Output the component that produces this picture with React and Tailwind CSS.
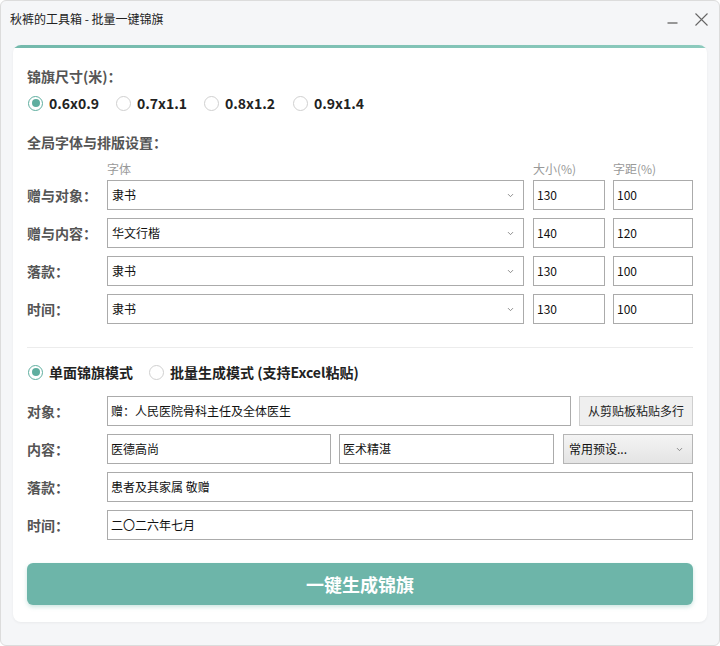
import { ChevronDown } from 'lucide-react';

const font = "font-['Microsoft_YaHei','Noto_Sans_CJK_SC',sans-serif]";

function Radio({ checked, label, className = '' }) {
  return (
    <div className={`flex items-center gap-[6px] ${className}`}>
      <span
        className={`w-[15px] h-[15px] rounded-full flex items-center justify-center border-[1.5px] ${
          checked ? 'border-[#5fae9f]' : 'border-[#d0d0d0]'
        }`}
      >
        {checked && <span className="w-[8px] h-[8px] rounded-full bg-[#5fae9f]" />}
      </span>
      <span className="text-[14px] font-bold text-[#222] leading-5">{label}</span>
    </div>
  );
}

function Field({ value, className = '' }) {
  return (
    <div
      className={`h-[30px] border border-[#ababab] bg-white flex items-center px-[3px] text-[12px] text-[#111] ${className}`}
    >
      {value}
    </div>
  );
}

function Select({ value, className = '' }) {
  return (
    <div
      className={`h-[30px] border border-[#ababab] bg-white flex items-center justify-between pl-[4px] pr-[8px] text-[12px] text-[#111] ${className}`}
    >
      <span>{value}</span>
      <ChevronDown className="w-[9px] h-[9px] text-[#777]" strokeWidth={2.2} />
    </div>
  );
}

function RowLabel({ children }) {
  return <div className="w-[80px] shrink-0 text-[14px] font-bold text-[#555]">{children}</div>;
}

const fonts = [
  { label: '赠与对象：', font: '隶书', size: '130', gap: '100' },
  { label: '赠与内容：', font: '华文行楷', size: '140', gap: '120' },
  { label: '落款：', font: '隶书', size: '130', gap: '100' },
  { label: '时间：', font: '隶书', size: '130', gap: '100' },
];

export default function App() {
  return (
    <div className={`w-[720px] h-[646px] bg-[#f5f6f8] border border-[#dcdcdc] rounded-[6px] overflow-hidden ${font}`}>
      {/* title bar */}
      <div className="h-9 flex items-center justify-between pl-[9px] pr-[11px]">
        <span className="text-[12px] text-[#222]">秋裤的工具箱 - 批量一键锦旗</span>
        <div className="flex items-center gap-[17px] text-[#666]">
          <svg width="11" height="12" viewBox="0 0 11 12" className="mt-[2px]">
            <line x1="0.5" y1="9" x2="10.5" y2="9" stroke="#777" strokeWidth="1.6" />
          </svg>
          <svg width="13" height="13" viewBox="0 0 13 13">
            <path d="M0.5 0.5 L12.5 12.5 M12.5 0.5 L0.5 12.5" stroke="#666" strokeWidth="1.1" fill="none" />
          </svg>
        </div>
      </div>

      {/* card */}
      <div className="mx-[12px] mt-2 bg-white rounded-[8px] overflow-hidden shadow-[0_1px_3px_rgba(0,0,0,0.05)]">
        <div className="h-[3px] bg-gradient-to-r from-[#73b9ac] to-[#8ccabd]" />
        <div className="px-[14px] pt-[18px] pb-[17px]">
          <div className="h-5 text-[14px] font-bold text-[#555] leading-5">锦旗尺寸(米)：</div>
          <div className="mt-[7px] flex items-center h-5">
            <Radio checked label="0.6x0.9" className="w-[89px] pl-[1px]" />
            <Radio label="0.7x1.1" className="w-[88px]" />
            <Radio label="0.8x1.2" className="w-[89px]" />
            <Radio label="0.9x1.4" />
          </div>

          <div className="mt-[19px] h-5 text-[14px] font-bold text-[#555] leading-5">全局字体与排版设置：</div>
          <div className="mt-[9px] flex h-4 text-[12px] leading-4 text-[#999]">
            <div className="w-[80px]" />
            <div className="w-[426px]">字体</div>
            <div className="w-[80px]">大小(%)</div>
            <div>字距(%)</div>
          </div>
          <div className="mt-[3px] flex flex-col gap-2">
            {fonts.map((f) => (
              <div key={f.label} className="flex items-center">
                <RowLabel>{f.label}</RowLabel>
                <Select value={f.font} className="w-[417px]" />
                <Field value={f.size} className="w-[72px] ml-[9px]" />
                <Field value={f.gap} className="w-[80px] ml-[8px]" />
              </div>
            ))}
          </div>

          <div className="mt-[23px] h-px bg-[#ececec]" />

          <div className="mt-[14px] flex items-center h-5">
            <Radio checked label="单面锦旗模式" className="w-[122px] pl-[1px]" />
            <Radio label="批量生成模式 (支持Excel粘贴)" />
          </div>

          <div className="mt-[14px] flex flex-col gap-2">
            <div className="flex items-center">
              <RowLabel>对象：</RowLabel>
              <Field value="赠：人民医院骨科主任及全体医生" className="w-[464px]" />
              <div className="ml-2 w-[114px] h-[30px] border border-[#cfcfcf] bg-[#efefef] flex items-center justify-center text-[12px] text-[#222]">
                从剪贴板粘贴多行
              </div>
            </div>
            <div className="flex items-center">
              <RowLabel>内容：</RowLabel>
              <Field value="医德高尚" className="w-[224px]" />
              <Field value="医术精湛" className="w-[215px] ml-2" />
              <div className="ml-[9px] w-[130px] h-[30px] border border-[#b5b5b5] bg-gradient-to-b from-[#f4f4f4] to-[#e4e4e4] flex items-center justify-between pl-[5px] pr-[8px] text-[12px] text-[#111]">
                <span>常用预设...</span>
                <ChevronDown className="w-[9px] h-[9px] text-[#777]" strokeWidth={2.2} />
              </div>
            </div>
            <div className="flex items-center">
              <RowLabel>落款：</RowLabel>
              <Field value="患者及其家属 敬赠" className="flex-1" />
            </div>
            <div className="flex items-center">
              <RowLabel>时间：</RowLabel>
              <Field value="二〇二六年七月" className="flex-1" />
            </div>
          </div>

          <button className="mt-[23px] w-full h-[42px] rounded-[6px] bg-[#6db5a9] text-white text-[18px] font-bold shadow-[0_2px_4px_rgba(109,181,169,0.35)]">
            一键生成锦旗
          </button>
        </div>
      </div>
    </div>
  );
}
